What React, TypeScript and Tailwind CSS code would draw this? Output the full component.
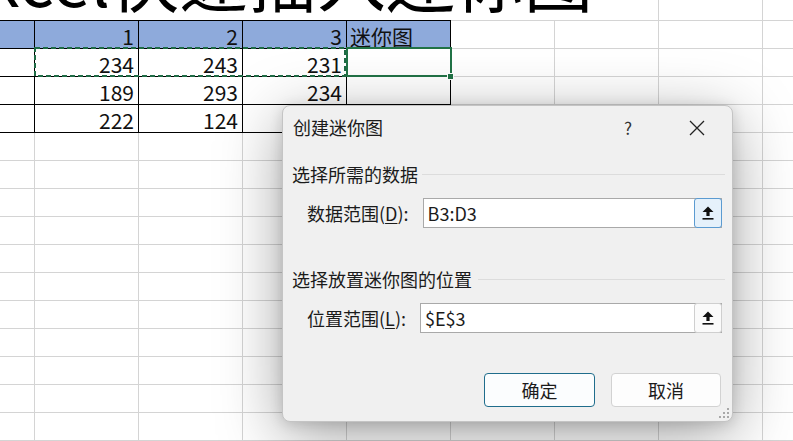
import React from 'react';

const cols = [35, 104, 104, 104, 104, 104, 104, 104];
const FONT = "font-['Noto_Sans_CJK_SC','Noto_Sans',sans-serif]";

const data = [
  ['', '234', '243', '231', ''],
  ['', '189', '293', '234', ''],
  ['', '222', '124', '', ''],
];

function UploadIcon() {
  return (
    <svg width="12" height="14" viewBox="0 0 12 14">
      <path d="M6 0.5 L11.5 6 H7.6 V10 H4.4 V6 H0.5 Z" fill="#111" />
      <rect x="0.5" y="12" width="11" height="1.6" fill="#111" />
    </svg>
  );
}

function GridRow({ tall, table, header, values }: { tall?: boolean; table: boolean; header?: boolean; values?: string[] }) {
  return (
    <div className="flex">
      {cols.map((w, i) => {
        const inTable = table && i < 5;
        const b = inTable ? 'border-black' : 'border-[#d4d4d4]';
        const bg = header && i < 5 ? 'bg-[#8eaadb]' : '';
        const v = values ? values[i] : '';
        const left = header && i === 4;
        return (
          <div
            key={i}
            style={{ width: w }}
            className={`shrink-0 border-r border-b ${tall ? 'border-t h-[29px]' : 'h-[28px]'} ${b} ${bg} flex items-end ${left ? 'justify-start pl-[3px]' : 'justify-end pr-[4px]'} text-[21px] leading-[24px] text-[#111]`}
          >
            {v}
          </div>
        );
      })}
      <div className={`flex-1 border-b ${tall ? 'border-t h-[29px]' : 'h-[28px]'} border-[#d4d4d4]`} />
    </div>
  );
}

export default function App() {
  return (
    <div className={`relative w-[793px] h-[441px] overflow-hidden bg-white ${FONT}`}>
      {/* row 1: oversized title, mostly scrolled out of view */}
      <div className="flex h-[20px]">
        <div className="w-[659px] h-[20px] shrink-0 border-r border-[#d4d4d4] overflow-hidden">
          <div className="w-[593px] flex justify-end mt-[-57px]">
            <span className="whitespace-nowrap text-[69px] leading-none text-black">Excel快速插入迷你图</span>
          </div>
        </div>
        <div className="w-[104px] shrink-0 border-r border-[#d4d4d4]" />
        <div className="flex-1" />
      </div>

      <GridRow tall table header values={['', '1', '2', '3', '迷你图']} />
      {data.map((r, i) => (
        <GridRow key={i} table values={r} />
      ))}
      {Array.from({ length: 12 }).map((_, i) => (
        <GridRow key={'e' + i} table={false} />
      ))}

      {/* copy marquee + active cell */}
      <svg className="absolute left-[33px] top-[47px]" width="316" height="32">
        <rect x="2" y="1" width="310" height="28" fill="none" stroke="#1f6b45" strokeWidth="2" strokeDasharray="5 3" />
      </svg>
      <div className="absolute left-[346px] top-[47px] w-[106px] h-[30px] border-2 border-[#217346]" />
      <div className="absolute left-[447px] top-[73px] w-[7px] h-[7px] bg-[#217346] border border-white" />

      {/* dialog */}
      <div className="absolute left-[282px] top-[105px] w-[451px] h-[317px] rounded-[8px] border border-[#c4c4c4] bg-[#f0f0f0] shadow-[0_14px_64px_rgba(0,0,0,0.36),0_2px_14px_rgba(0,0,0,0.14)] flex flex-col text-[18px] text-[#1b1b1b]">
        <div className="h-[43px] flex items-center pl-[10px] pr-[15px]">
          <span>创建迷你图</span>
          <span className="ml-auto w-[40px] text-center text-[17px] text-[#333]">?</span>
          <span className="ml-[29px] w-[40px] flex justify-center">
            <svg width="16" height="16" viewBox="0 0 16 16">
              <path d="M1 1 L15 15 M15 1 L1 15" stroke="#222" strokeWidth="1.3" />
            </svg>
          </span>
        </div>

        <div className="mt-[13px] h-[24px] flex items-center pl-[9px] pr-[7px] leading-[24px]">
          <span>选择所需的数据</span>
          <div className="flex-1 h-px bg-[#dcdcdc] ml-[4px]" />
        </div>

        <div className="mt-[12px] flex items-center gap-[14px] pl-[24px] pr-[10px]">
          <span>
            数据范围(<span className="underline underline-offset-2">D</span>):
          </span>
          <div className="flex-1 h-[30px] border border-[#a9a9a9] bg-white flex items-center">
            <span className="flex-1 pl-[4px] leading-none">B3:D3</span>
            <div className="w-[28px] h-[30px] -my-px -mr-px rounded-[3px] border border-[#5b9bd1] bg-[#e5f1fb] flex items-center justify-center">
              <UploadIcon />
            </div>
          </div>
        </div>

        <div className="mt-[39px] h-[24px] flex items-center pl-[9px] pr-[7px] leading-[24px]">
          <span>选择放置迷你图的位置</span>
          <div className="flex-1 h-px bg-[#dcdcdc] ml-[6px]" />
        </div>

        <div className="mt-[12px] flex items-center gap-[14px] pl-[24px] pr-[10px]">
          <span>
            位置范围(<span className="underline underline-offset-2">L</span>):
          </span>
          <div className="flex-1 h-[30px] border border-[#a9a9a9] bg-white flex items-center">
            <span className="flex-1 pl-[4px] leading-none">$E$3</span>
            <div className="w-[28px] h-[30px] -my-px -mr-px rounded-[3px] border border-[#cfcfcf] bg-[#fafafa] flex items-center justify-center">
              <UploadIcon />
            </div>
          </div>
        </div>

        <div className="mt-[40px] flex justify-end gap-[16px] pr-[11px]">
          <button className="w-[111px] h-[34px] rounded-[4px] border border-[#1f6d8c] bg-[#fbfdfe] text-[18px]">确定</button>
          <button className="w-[110px] h-[34px] rounded-[4px] border border-[#d2d2d2] bg-[#fdfdfd] text-[18px]">取消</button>
        </div>

        <svg className="absolute right-[3px] bottom-[3px]" width="11" height="11" viewBox="0 0 11 11">
          {[
            [9, 1], [9, 5], [9, 9], [5, 5], [5, 9], [1, 9],
          ].map(([x, y], i) => (
            <rect key={i} x={x} y={y} width="2" height="2" fill="#a8a8a8" />
          ))}
        </svg>
      </div>
    </div>
  );
}
